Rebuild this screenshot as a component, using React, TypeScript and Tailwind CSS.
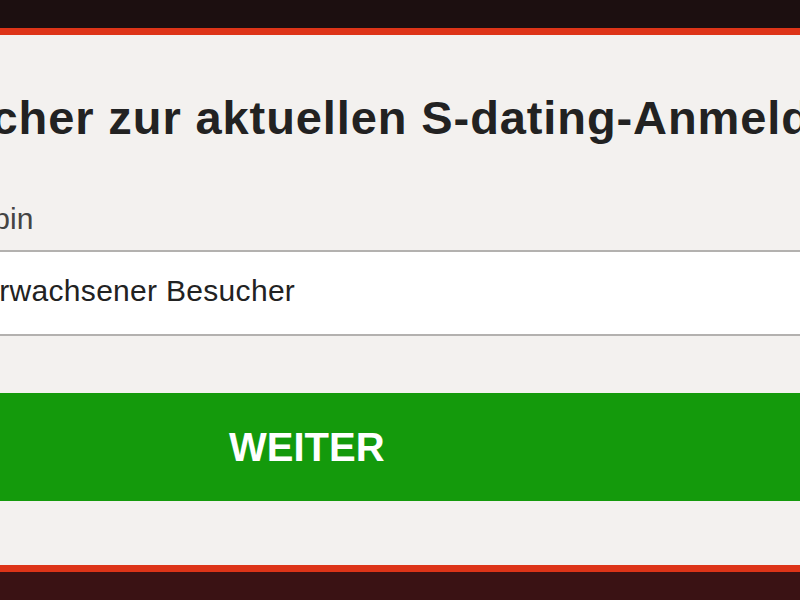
export default function App() {
  return (
    <div
      className="flex h-[600px] w-[800px] flex-col overflow-hidden bg-[#f3f1ef]"
      style={{ fontFamily: '"Liberation Sans", Arial, sans-serif' }}
    >
      <div className="h-[28px] shrink-0 bg-[#1c0f10]" />
      <div className="h-[7px] shrink-0 bg-[#dd3418]" />

      <main className="flex-1 overflow-hidden">
        <div className="-ml-[35px] w-[900px]">
          <h1 className="-ml-[92px] mt-[57px] whitespace-nowrap text-[47px] font-bold leading-[52px] tracking-[0.9px] text-[#222]">
            Besucher zur aktuellen S-dating-Anmeldung
          </h1>

          <label className="-ml-[20px] mt-[58px] block whitespace-nowrap text-[30px] leading-[34px] text-[#444]">
            Ich bin
          </label>

          <div className="mt-[14px] flex h-[86px] items-center border-y-2 border-[#b3b1af] bg-white pb-[5px] pl-[14px]">
            <span className="whitespace-nowrap text-[30px] tracking-[0.3px] text-[#222]">Erwachsener Besucher</span>
          </div>

          <button className="mt-[57px] flex h-[108px] w-full items-center bg-[#149a0c] pl-[264px] text-[40px] font-bold text-white">
            WEITER
          </button>
        </div>
      </main>

      <div className="h-[7px] shrink-0 bg-[#dd3418]" />
      <div className="h-[28px] shrink-0 bg-[#3a1214]" />
    </div>
  );
}
